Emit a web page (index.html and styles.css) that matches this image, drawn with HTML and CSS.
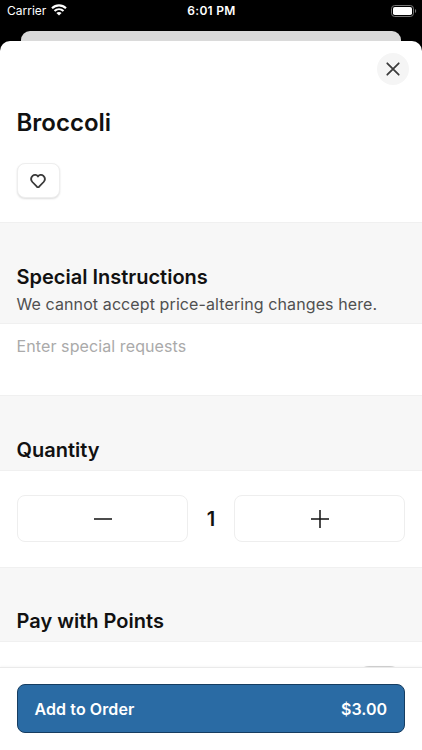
FILE: index.html
```html
<!DOCTYPE html>
<html lang="en">
<head>
<meta charset="utf-8">
<title>Broccoli</title>
<link rel="stylesheet" href="styles.css">
</head>
<body>
<div class="status">
  <div class="carrier"><span class="carrier-name">Carrier</span>
    <svg class="wifi" width="16" height="12" viewBox="0 0 16 12"><g fill="none" stroke="#fff" stroke-width="2.1"><path d="M1 4.3C5 .4 11 .4 15 4.3"/><path d="M3.5 7.1c2.6-2.4 6.4-2.4 9 0"/></g><path fill="#fff" d="M5.4 8.9c1.5-1.3 3.7-1.3 5.2 0L8 11.5z"/></svg>
  </div>
  <span class="time">6:01 PM</span>
  <svg class="battery" width="26" height="12" viewBox="0 0 26 12"><rect x=".5" y=".5" width="22" height="11" rx="3.2" fill="none" stroke="#777"/><rect x="2" y="2" width="19" height="8" rx="1.8" fill="#fff"/><path d="M24 4v4c1.6-.7 1.6-3.3 0-4z" fill="#777"/></svg>
</div>
<div class="behind"></div>
<main class="sheet">
  <section class="product">
    <button class="close" aria-label="Close"><svg width="14" height="14" viewBox="0 0 14 14"><path d="M1.3 1.3l11.4 11.4M12.7 1.3L1.3 12.7" stroke="#3c3c3c" stroke-width="1.8" stroke-linecap="round"/></svg></button>
    <h1>Broccoli</h1>
    <button class="favorite" aria-label="Favorite"><svg width="16" height="14" viewBox="0 0 16 14"><path d="M8 2.5C6.7 .7 4.2 .4 2.6 1.9 .8 3.6 .9 6.2 2.4 8L6.9 12.7Q8 13.6 9.1 12.7L13.6 8C15.1 6.2 15.2 3.6 13.4 1.9 11.8 .4 9.3 .7 8 2.5z" fill="none" stroke="#3a3a3a" stroke-width="1.8" stroke-linejoin="round"/></svg></button>
  </section>
  <header class="band band-notes"><h2>Special Instructions</h2><p>We cannot accept price-altering changes here.</p></header>
  <div class="request">Enter special requests</div>
  <header class="band band-quantity"><h2>Quantity</h2></header>
  <div class="stepper">
    <button class="step" aria-label="Decrease"><svg width="18" height="18" viewBox="0 0 18 18"><path d="M0 9h18" stroke="#111" stroke-width="1.5"/></svg></button>
    <span class="count">1</span>
    <button class="step" aria-label="Increase"><svg width="18" height="18" viewBox="0 0 18 18"><path d="M0 9h18M9 0v18" stroke="#111" stroke-width="1.5"/></svg></button>
  </div>
  <header class="band band-points"><h2>Pay with Points</h2></header>
  <div class="points"><span class="toggle"></span></div>
  <footer><button class="add"><span class="add-label">Add to Order</span><span class="price">$3.00</span></button></footer>
</main>
</body>
</html>
```
FILE: styles.css
```css
* { box-sizing: border-box; margin: 0; }
body {
  width: 422px;
  height: 750px;
  overflow: hidden;
  display: flex;
  flex-direction: column;
  background: #000;
  color: #111;
  font-family: Inter, "Liberation Sans", sans-serif;
}
button { font: inherit; padding: 0; display: flex; align-items: center; justify-content: center; }
h1, h2, p, span { white-space: nowrap; }
.status {
  height: 31px;
  padding: 3px 6px 0 7px;
  display: grid;
  grid-template-columns: 1fr auto 1fr;
  color: #fff;
  font-size: 12px;
  line-height: 16px;
}
.carrier { display: flex; gap: 4px; }
.carrier-name { width: 40px; }
.wifi { margin-top: 1px; }
.time { font-weight: 600; letter-spacing: 0.3px; }
.battery { justify-self: end; margin: 2px -1px 0 0; }
.behind { height: 10px; margin: 0 21px; background: #dadada; border-radius: 9px 9px 0 0; }
.sheet { height: 709px; background: #fff; border-radius: 10px 10px 0 0; display: flex; flex-direction: column; overflow: hidden; }
.product { height: 181px; padding: 12px 13px 0 16.5px; display: flex; flex-direction: column; }
.close { width: 32px; height: 32px; border: 0; border-radius: 50%; background: #f5f5f5; align-self: flex-end; }
h1 { margin-top: 22px; font-size: 24px; line-height: 32px; font-weight: 600; letter-spacing: 0; }
.favorite { width: 43px; height: 35px; margin-top: 24px; border: 1px solid #eee; border-radius: 8px; background: #fff; box-shadow: 0 1px 2px #0002; }
.band { background: #f7f7f7; padding-left: 16.5px; border: 0 solid #f0f0f0; border-width: 1px 0; }
.band-notes { height: 102px; padding-top: 41px; }
.band-quantity { height: 76px; padding-top: 41px; }
.band-points { height: 75px; padding-top: 40px; }
h2 { font-size: 20px; line-height: 26px; font-weight: 600; }
.band p { margin-top: 3px; font-size: 16px; line-height: 22px; letter-spacing: 0.1px; color: #505050; }
.request { height: 71px; padding: 11px 16.5px; color: #aaa; font-size: 16px; line-height: 22px; letter-spacing: 0.1px; }
.stepper { height: 96px; padding: 0 17px 1px; display: flex; align-items: center; }
.step { flex: 1; height: 47px; border: 1px solid #eee; border-radius: 8px; background: #fff; }
.count { width: 46px; text-align: center; font-size: 20px; line-height: 26px; font-weight: 600; }
.points { height: 25px; padding: 24px 17px 0; overflow: hidden; display: flex; justify-content: flex-end; }
.toggle { flex: none; width: 51px; height: 31px; border-radius: 16px; background: #d2d2d2; }
footer { height: 83px; padding: 16px 17px 0 16.5px; border-top: 1px solid #eaeaea; box-shadow: 0 -1px 2px #00000008; background: #fff; }
.add { width: 100%; height: 49px; padding: 0 17px; border: 1px solid #163d61; border-radius: 8px; background: #2a6ba4; color: #fff; justify-content: space-between; font-size: 16px; font-weight: 600; }
.add-label { letter-spacing: 0.1px; }
```
